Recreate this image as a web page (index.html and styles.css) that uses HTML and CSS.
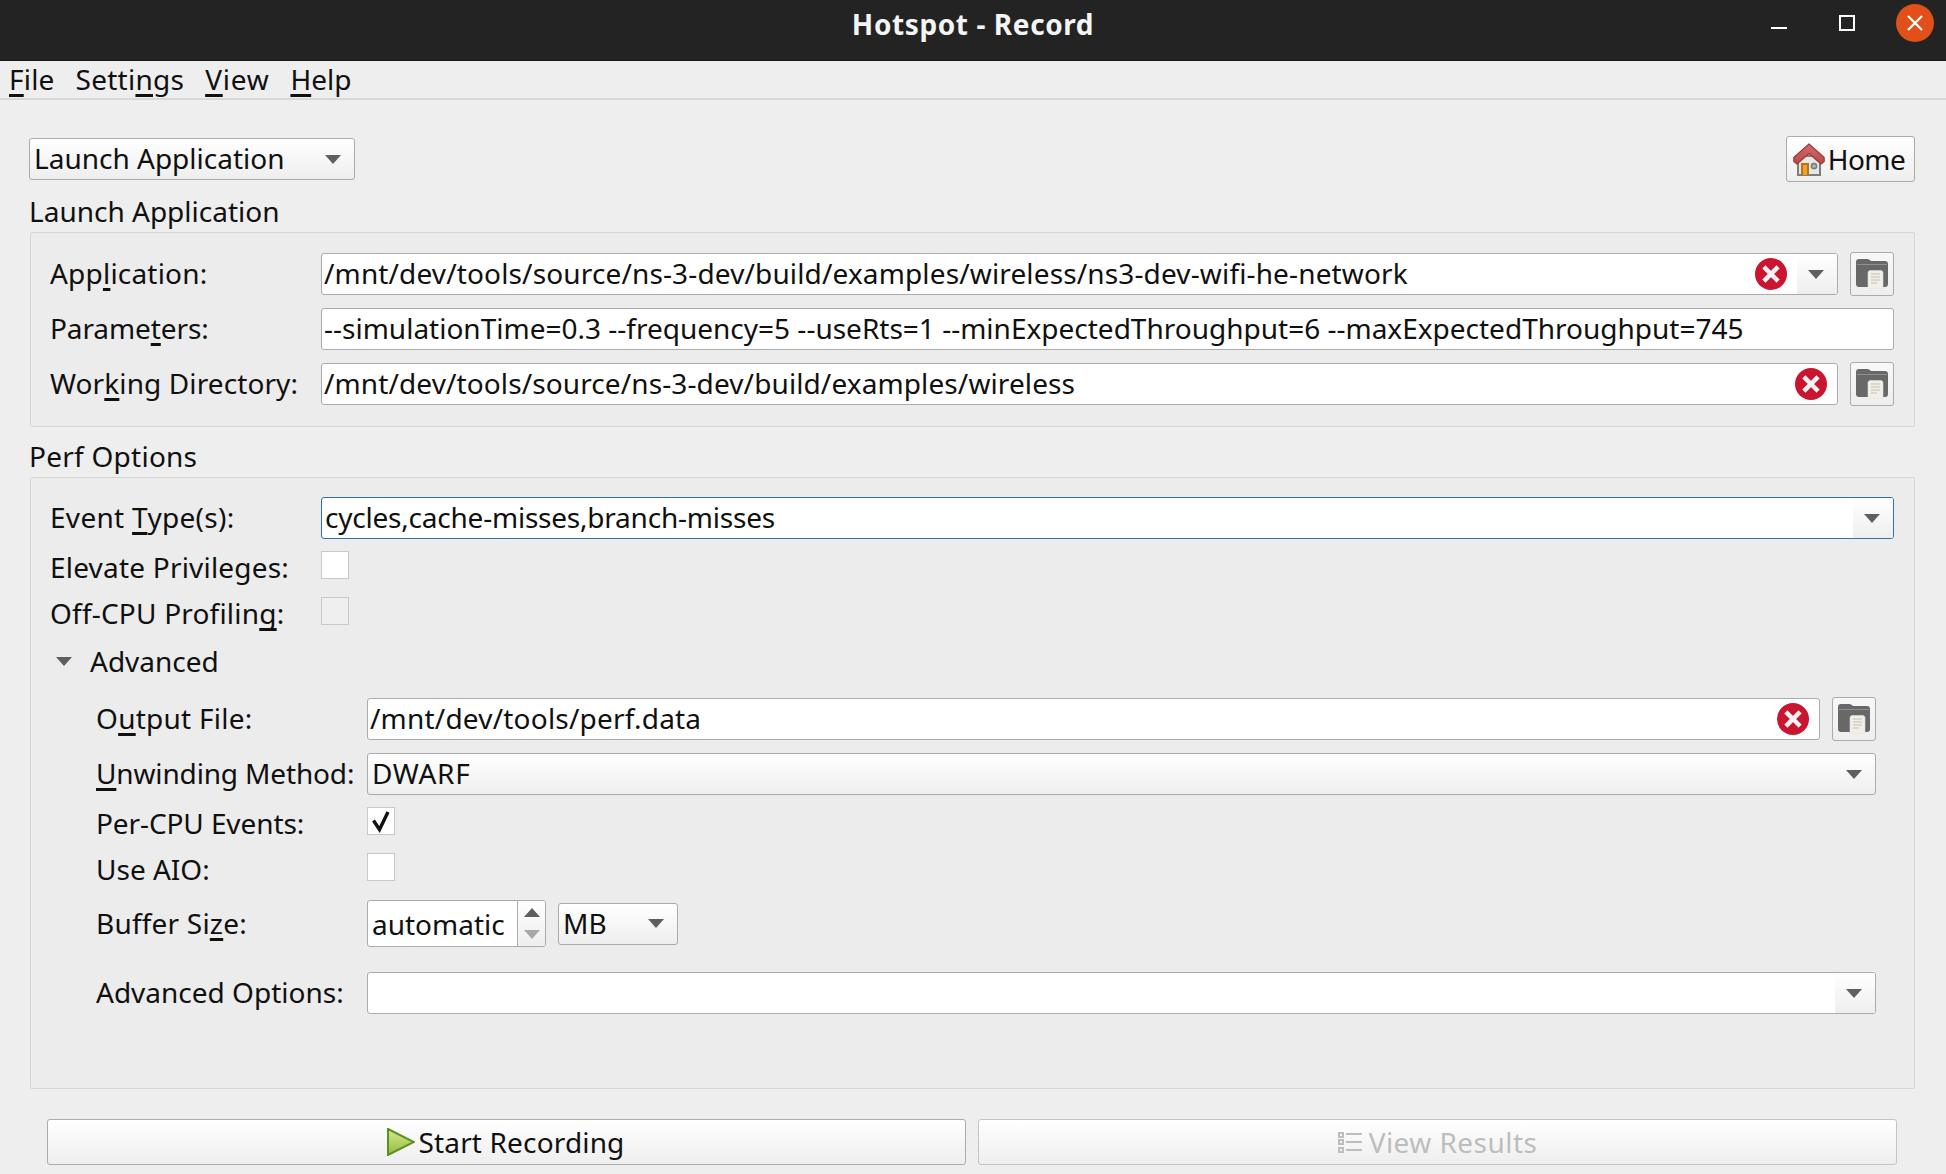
FILE: index.html
```html
<!DOCTYPE html>
<html lang="en">
<head>
<meta charset="utf-8">
<title>Hotspot - Record</title>
<link rel="stylesheet" href="styles.css">
</head>
<body>
<svg class="defs" width="0" height="0" aria-hidden="true">
  <defs>
    <linearGradient id="play" x1="0" y1="0" x2="0" y2="1"><stop offset="0" stop-color="#d9e88f"/><stop offset="1" stop-color="#93bb3c"/></linearGradient>
    <linearGradient id="roof" x1="0" y1="0" x2="0" y2="1"><stop offset="0" stop-color="#d66a6a"/><stop offset="1" stop-color="#b8474a"/></linearGradient>
    <symbol id="clear" viewBox="0 0 32 32">
      <circle cx="16" cy="16" r="16" fill="#c9152f"/>
      <path d="M10.500 10.500l11 11M21.500 10.500l-11 11" stroke="#fdf3f4" stroke-width="4.500" stroke-linecap="square" fill="none"/>
    </symbol>
    <symbol id="folder" viewBox="0 0 32 30">
      <path d="M3 0h8c2 0 3 1 4 2h14c2 0 3 1 3 3v20c0 2-1 3-3 3H3c-2 0-3-1-3-3V3C0 1 1 0 3 0z" fill="#686868"/>
      <path d="M1 5.500h30" stroke="#8f8f8f" stroke-width="1" fill="none"/>
      <path d="M12 13.500c0-1 1-2 2-2h11c1 0 2 1 2 2V28c0 1-1 2-2 2H14c-1 0-2-1-2-2z" fill="#f1efe8" stroke="#dcdcdc" stroke-width=".6"/>
      <path d="M15 15h9M15 18h9M15 21h9M15 24h6" stroke="#c4c1ab" stroke-width="1.200" fill="none"/>
    </symbol>
  </defs>
</svg>

<header class="titlebar">
  <h1 class="title">Hotspot - Record</h1>
  <div class="window-controls">
    <svg class="wc-min" width="16" height="2" viewBox="0 0 16 2"><rect width="16" height="2" fill="#fff"/></svg>
    <svg class="wc-max" width="16" height="16" viewBox="0 0 16 16"><rect x="1" y="1" width="14" height="14" fill="none" stroke="#fff" stroke-width="2"/></svg>
    <div class="wc-close"><svg width="16" height="16" viewBox="0 0 16 16"><path d="M1 1l14 14M15 1L1 15" stroke="#fff" stroke-width="2.200" fill="none"/></svg></div>
  </div>
</header>

<nav class="menubar">
  <span class="menu menu-file"><u>F</u>ile</span>
  <span class="menu menu-settings">Setti<u>n</u>gs</span>
  <span class="menu menu-view"><u>V</u>iew</span>
  <span class="menu menu-help"><u>H</u>elp</span>
</nav>

<main class="content">
  <div class="toolbar">
    <div class="field combo combo-launch"><span class="value value-launch">Launch Application</span><span class="arrow"></span></div>
    <button class="btn btn-home">
      <svg width="32" height="33" viewBox="0 0 32 33">
        <path d="M5 13h22v19H5z" fill="#e6e6e6" stroke="#7d7d7d" stroke-width="2"/>
        <path d="M8 20h8v12H8z" fill="#b9740f"/><path d="M10 22h4v10h-4z" fill="#e9a22e"/>
        <circle cx="21" cy="23" r="2.600" fill="#9cc0cc" stroke="#777" stroke-width="1.500"/>
        <path d="M16 1L.8 14.500v4L4 21 16 10.500 28 21l3.200-2.500v-4z" fill="url(#roof)" stroke="#9a3a3e" stroke-width="1.200" stroke-linejoin="round"/>
      </svg>
      <span class="txt-home">Home</span>
    </button>
  </div>

  <h2 class="group-title">Launch Application</h2>
  <section class="group group-launch">
    <div class="form-row">
      <label class="label lbl-app">App<u>l</u>ication:</label>
      <div class="line">
        <div class="field input grow"><span class="value value-path1">/mnt/dev/tools/source/ns-3-dev/build/examples/wireless/ns3-dev-wifi-he-network</span><svg class="clear"><use href="#clear"/></svg><span class="drop"><span class="arrow"></span></span></div>
        <button class="btn btn-folder"><svg width="32" height="30"><use href="#folder"/></svg></button>
      </div>
    </div>
    <div class="form-row">
      <label class="label lbl-par">Parame<u>t</u>ers:</label>
      <div class="field input"><span class="value value-params">--simulationTime=0.3 --frequency=5 --useRts=1 --minExpectedThroughput=6 --maxExpectedThroughput=745</span></div>
    </div>
    <div class="form-row">
      <label class="label lbl-wd">Wor<u>k</u>ing Directory:</label>
      <div class="line">
        <div class="field input grow"><span class="value value-path2">/mnt/dev/tools/source/ns-3-dev/build/examples/wireless</span><svg class="clear"><use href="#clear"/></svg></div>
        <button class="btn btn-folder"><svg width="32" height="30"><use href="#folder"/></svg></button>
      </div>
    </div>
  </section>

  <h2 class="group-title title-perf">Perf Options</h2>
  <section class="group group-perf">
    <div class="form-row">
      <label class="label lbl-ev">Event <u>T</u>ype(s):</label>
      <div class="field input focused"><span class="value value-ev">cycles,cache-misses,branch-misses</span><span class="drop"><span class="arrow"></span></span></div>
    </div>
    <div class="form-row check-row">
      <label class="label lbl-el">Elevate Privileges:</label>
      <span class="check"></span>
    </div>
    <div class="form-row check-row spaced">
      <label class="label lbl-off">Off-CPU Profilin<u>g</u>:</label>
      <span class="check disabled"></span>
    </div>

    <div class="advanced-head"><span class="arrow"></span><span class="adv-text">Advanced</span></div>

    <div class="advanced">
      <div class="form-row">
        <label class="label lbl-out">O<u>u</u>tput File:</label>
        <div class="line">
          <div class="field input grow"><span class="value value-out">/mnt/dev/tools/perf.data</span><svg class="clear"><use href="#clear"/></svg></div>
          <button class="btn btn-folder"><svg width="32" height="30"><use href="#folder"/></svg></button>
        </div>
      </div>
      <div class="form-row">
        <label class="label lbl-unw"><u>U</u>nwinding Method:</label>
        <div class="field combo combo-wide"><span class="value value-dwarf">DWARF</span><span class="arrow"></span></div>
      </div>
      <div class="form-row check-row">
        <label class="label lbl-cpu">Per-CPU Events:</label>
        <span class="check"><svg width="24" height="24" viewBox="0 0 24 24"><path d="M4.500 11.500l6 9L19 3" stroke="#111" stroke-width="3.400" fill="none"/></svg></span>
      </div>
      <div class="form-row check-row spaced">
        <label class="label lbl-aio">Use AIO:</label>
        <span class="check"></span>
      </div>
      <div class="form-row buffer-row">
        <label class="label lbl-buf">Buffer Si<u>z</u>e:</label>
        <div class="line buffer-line">
          <div class="spin">
            <span class="spin-value">automatic</span>
            <span class="spin-btns"><span class="arrow arrow-up"></span><span class="arrow arrow-down"></span></span>
          </div>
          <div class="field combo combo-unit"><span class="value value-mb">MB</span><span class="arrow"></span></div>
        </div>
      </div>
      <div class="form-row options-row">
        <label class="label lbl-opt">Advanced Options:</label>
        <div class="field input"><span class="value"></span><span class="drop"><span class="arrow"></span></span></div>
      </div>
    </div>
  </section>

  <div class="actions">
    <button class="btn btn-action btn-start">
      <svg width="28" height="28" viewBox="0 0 28 28"><path d="M1 1l26 13L1 27z" fill="url(#play)" stroke="#5c9023" stroke-width="2"/></svg>
      <span class="txt-start">Start Recording</span>
    </button>
    <button class="btn btn-action btn-view disabled">
      <svg width="24" height="24" viewBox="0 0 24 24" fill="none" stroke="#bdbdbd" stroke-width="2"><path d="M1 3h4v4H1zM1 10h4v4H1zM1 18h4v4H1z"/><path d="M8 4h16M8 12h16M8 20h16"/></svg>
      <span class="txt-view">View Results</span>
    </button>
  </div>
</main>
</body>
</html>
```

FILE: styles.css
```css
* { box-sizing: border-box; }
html, body { margin: 0; height: 100%; }
body {
  width: 1946px;
  height: 1174px;
  overflow: hidden;
  background: #eeeeee;
  color: #101010;
  font-family: "Noto Sans", "Open Sans", "DejaVu Sans", sans-serif;
  font-size: 28px;
  line-height: 38px;
}
.defs { position: absolute; }
u { text-decoration-thickness: 3px; text-underline-offset: 4px; text-decoration-skip-ink: none; }

/* title bar */
.titlebar {
  height: 61px;
  background: #232323;
  border-bottom: 1px solid #1a1a1a;
  display: flex;
  align-items: center;
  justify-content: center;
  position: relative;
}
.title { margin: 0 0 12px; color: #f4f4f4; font-size: 28px; font-weight: 700; line-height: 38px; letter-spacing: .6px; }
.window-controls { position: absolute; left: 0; right: 0; top: 0; height: 60px; }
.wc-min { position: absolute; left: 1771px; top: 27px; }
.wc-max { position: absolute; left: 1839px; top: 15px; }
.wc-close {
  position: absolute; left: 1896px; top: 4px;
  width: 38px; height: 38px; border-radius: 50%;
  background: #e2501a;
  display: flex; align-items: center; justify-content: center;
}

/* menu */
.menubar {
  height: 39px;
  border-bottom: 2px solid #d8d8d8;
  display: flex;
  align-items: center;
  padding: 0 0 1px 9px;
  gap: 21px;
}
.menu-file { letter-spacing: .2px; }
.menu-settings { letter-spacing: .25px; }
.menu-view { letter-spacing: .75px; }

/* main */
.content { padding: 36px 31px 0 30px; }
.toolbar { display: flex; justify-content: space-between; align-items: center; height: 46px; }
.group-title { margin: 0 0 0 -1px; height: 50px; padding-top: 10px; font-size: 28px; font-weight: 400; line-height: 39px; }
.title-perf { letter-spacing: .25px; }
.group {
  border: 1px solid #d6d6d6;
  border-radius: 2px;
  background: #ececec;
  padding: 19px 20px 20px 19px;
  display: flex;
  flex-direction: column;
  gap: 12px;
}
.form-row { display: grid; grid-template-columns: 271px 1fr; align-items: center; min-height: 42px; }
.line { display: flex; align-items: center; gap: 12px; }
.grow { flex: 1; min-width: 0; }
.label { white-space: nowrap; padding-bottom: 2px; }
.lbl-app { letter-spacing: .2px; }
.lbl-par { letter-spacing: -.1px; }
.lbl-wd { letter-spacing: .1px; }
.lbl-ev { letter-spacing: .3px; }
.lbl-el, .lbl-off, .lbl-buf { letter-spacing: .2px; }
.lbl-out { letter-spacing: .25px; }
.lbl-unw { letter-spacing: -.15px; }
.lbl-cpu { letter-spacing: -.1px; }

/* fields */
.field {
  height: 42px;
  border: 1px solid #ababab;
  border-radius: 3px;
  display: flex;
  align-items: center;
  white-space: nowrap;
  position: relative;
  overflow: hidden;
}
.input { background: #fff; padding-left: 2px; }
.focused { border-color: #2f74a8; padding-left: 3px; }
.combo { background: linear-gradient(#ffffff, #eeeeee); padding-left: 4px; justify-content: space-between; }
.combo-launch { width: 326px; padding-right: 13px; margin-left: -1px; }
.combo-wide { padding-right: 13px; }
.combo-unit { width: 120px; padding-right: 13px; }
.value { flex: 1; padding-bottom: 2px; }
.value-path1 { letter-spacing: .14px; }
.value-path2 { letter-spacing: .11px; }
.value-ev { letter-spacing: -.22px; }
.value-out { letter-spacing: .2px; }
.value-dwarf { letter-spacing: .7px; }
.arrow {
  flex: none;
  width: 0; height: 0;
  border-left: 8px solid transparent;
  border-right: 8px solid transparent;
  border-top: 9px solid #5f5f5f;
}
.drop {
  flex: none;
  width: 40px; height: 100%;
  padding-right: 3px;
  background: linear-gradient(#ffffff, #eeeeee);
  display: flex; align-items: center; justify-content: center;
}
.clear { flex: none; width: 32px; height: 32px; margin-right: 10px; }

/* buttons */
.btn {
  font: inherit;
  color: inherit;
  background: linear-gradient(#ffffff, #eeeeee);
  border: 1px solid #ababab;
  border-radius: 3px;
  padding: 0;
  display: flex;
  align-items: center;
  justify-content: center;
}
.btn-home { width: 129px; height: 46px; gap: 3px; padding-right: 3px; }
.txt-home { letter-spacing: -.5px; }
.btn-folder { flex: none; width: 44px; height: 44px; background: linear-gradient(#f8f8f8, #eeeeee); }

/* checks */
.check {
  width: 28px; height: 28px;
  border: 1px solid #c8c8c8;
  background: #fff;
  display: flex; align-items: center; justify-content: center;
}
.check.disabled { background: #efefef; }
.check-row { min-height: 28px; }
.check-row .label { position: relative; top: 2px; padding: 0; line-height: 28px; }
.spaced { margin-top: 6px; }

/* advanced */
.advanced-head { height: 40px; margin: 4px 0 4px 6px; display: flex; align-items: center; gap: 18px; }
.advanced {
  padding: 0 18px 0 46px;
  display: flex;
  flex-direction: column;
  gap: 12px;
}
.buffer-row { min-height: 47px; margin-top: 7px; }
.options-row { margin-top: 13px; margin-bottom: 54px; }
.buffer-line { gap: 12px; }
.spin {
  width: 179px; height: 47px;
  background: #fff;
  border: 1px solid #ababab;
  border-radius: 3px;
  display: flex;
  align-items: center;
  overflow: hidden;
}
.spin-value { flex: 1; padding: 0 0 0 4px; }
.spin-btns {
  width: 28px; height: 100%;
  border-left: 1px solid #ababab;
  background: linear-gradient(#ffffff, #eeeeee);
  display: flex; flex-direction: column; align-items: center; justify-content: center; gap: 13px;
}
.arrow-up { border-top: 0; border-bottom: 9px solid #5f5f5f; }
.arrow-down { border-top-color: #a8a8a8; }

/* actions */
.actions { display: grid; grid-template-columns: 919px 919px; gap: 12px; margin: 30px 0 0 17px; }
.btn-action { height: 46px; gap: 4px; }
.btn-start { padding-right: 2px; }
.btn-view { gap: 7px; }
.txt-start { letter-spacing: .15px; }
.txt-view { letter-spacing: .45px; }
.btn-action.disabled { color: #bdbdbd; border-color: #c4c4c4; }
```
